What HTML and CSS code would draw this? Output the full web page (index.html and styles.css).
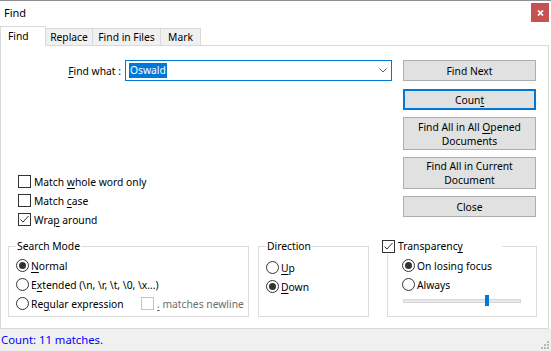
FILE: index.html
```html
<!DOCTYPE html>
<html lang="en">
<head>
<meta charset="utf-8">
<title>Find</title>
<link rel="stylesheet" href="styles.css">
</head>
<body>
<div class="window">
  <div class="titlebar">
    <span class="title">Find</span>
    <span class="close"><svg width="7" height="6" viewBox="0 0 7 6"><path d="M1 0.5L6 5.5M6 0.5L1 5.5" stroke="#fff" stroke-width="1.7"/></svg></span>
  </div>
  <div class="tabs">
    <div class="tab tab-active tab-find">Find</div>
    <div class="tab tab-replace">Replace</div>
    <div class="tab tab-files">Find in Files</div>
    <div class="tab tab-mark">Mark</div>
  </div>
  <div class="panel">
    <div class="main">
      <div class="left">
        <div class="findrow">
          <span class="findlabel"><u>F</u>ind what :</span>
          <div class="combo">
            <span class="selected">Oswald</span>
            <svg class="chevron" width="8" height="5" viewBox="0 0 8 5"><path d="M0.5 0.5L4 4L7.5 0.5" fill="none" stroke="#606060" stroke-width="1"/></svg>
          </div>
        </div>
        <div class="checks">
          <div class="opt"><span class="cbox"></span><span>Match <u>w</u>hole word only</span></div>
          <div class="opt"><span class="cbox"></span><span>Match <u>c</u>ase</span></div>
          <div class="opt"><span class="cbox"><svg width="11" height="11" viewBox="0 0 11 11"><path d="M1.5 5.5L4 8L9.5 2" fill="none" stroke="#333" stroke-width="1"/></svg></span><span>Wra<u>p</u> around</span></div>
        </div>
      </div>
      <div class="buttons">
        <div class="btn"><span>Find Next</span></div>
        <div class="btn btn-focus"><span>Coun<u>t</u></span></div>
        <div class="btn btn-tall"><span>Find All in All <u>O</u>pened<br>Documents</span></div>
        <div class="btn btn-tall2"><span>Find All in Current<br>Document</span></div>
        <div class="btn"><span>Close</span></div>
      </div>
    </div>
    <div class="groups">
      <fieldset class="group group-search">
        <legend>Search Mode</legend>
        <div class="opt first"><span class="radio on"></span><span><u>N</u>ormal</span></div>
        <div class="opt"><span class="radio"></span><span>E<u>x</u>tended (\n, \r, \t, \0, \x...)</span></div>
        <div class="opt"><span class="radio"></span><span class="regex-label">Re<u>g</u>ular expression</span><span class="cbox cbox-disabled"></span><span class="disabled-text"><u>.</u> matches newline</span></div>
      </fieldset>
      <fieldset class="group group-dir">
        <legend>Direction</legend>
        <div class="opt first"><span class="radio"></span><span><u>U</u>p</span></div>
        <div class="opt"><span class="radio on"></span><span><u>D</u>own</span></div>
      </fieldset>
      <fieldset class="group group-trans">
        <legend><span class="cbox"><svg width="11" height="11" viewBox="0 0 11 11"><path d="M1.5 5.5L4 8L9.5 2" fill="none" stroke="#333" stroke-width="1"/></svg></span><span>Transparenc<u>y</u></span></legend>
        <div class="opt first"><span class="radio on"></span><span>On losing focus</span></div>
        <div class="opt"><span class="radio"></span><span>Always</span></div>
        <div class="slider"><div class="track"></div><div class="thumb"></div></div>
      </fieldset>
    </div>
  </div>
  <div class="status">
    <span class="status-text">Count: 11 matches.</span>
    <svg class="grip" width="10" height="10" viewBox="0 0 10 10" fill="#b8b8b8"><rect x="7" y="1" width="2" height="2"/><rect x="4" y="4" width="2" height="2"/><rect x="7" y="4" width="2" height="2"/><rect x="1" y="7" width="2" height="2"/><rect x="4" y="7" width="2" height="2"/><rect x="7" y="7" width="2" height="2"/></svg>
  </div>
</div>
</body>
</html>
```

FILE: styles.css
```css
* { box-sizing: border-box; }
html, body { margin: 0; padding: 0; }
body {
  width: 551px; height: 351px; overflow: hidden; background: #fff;
  font-family: "Noto Sans", "Open Sans", sans-serif;
  font-size: 10.3px; line-height: 16px; color: #000;
}
u { text-decoration: underline; text-decoration-thickness: 1px; text-underline-offset: 2px; }

.window { width: 551px; height: 351px; display: flex; flex-direction: column; border-top: 1px solid #8f8f8f; }

.titlebar { height: 22px; flex: none; display: flex; align-items: flex-start; justify-content: space-between; padding-left: 4px; padding-right: 2px; }
.title { line-height: 23px; font-size: 11px; }
.close { margin-top: 2px; width: 18px; height: 19px; background: #c75050; display: flex; align-items: center; justify-content: center; }

.tabs { height: 22px; flex: none; display: flex; align-items: flex-end; }
.tab { height: 17px; border: 1px solid #d9d9d9; border-bottom: none; background: #f0f0f0; text-align: center; line-height: 16px; margin-left: -1px; white-space: nowrap; }
.tab-active { height: 20px; margin-left: 0; margin-bottom: -1px; background: #fff; position: relative; z-index: 1; text-align: left; padding-left: 7px; padding-top: 1px; }
.tab-find { width: 46px; }
.tab-replace { width: 48px; }
.tab-files { width: 69px; }
.tab-mark { width: 41px; }

.panel { height: 284px; width: 549px; flex: none; border: 1px solid #d9d9d9; display: flex; flex-direction: column; }
.main { display: flex; padding-top: 14px; }
.left { width: 391px; }
.findrow { display: flex; align-items: center; height: 21px; }
.findlabel { width: 120px; text-align: right; white-space: nowrap; }
.combo { margin-left: 4px; width: 267px; height: 21px; border: 1px solid #0078d7; display: flex; align-items: center; padding-left: 3px; padding-right: 4px; }
.selected { background: #0078d7; color: #fff; line-height: 15px; padding: 0 1px; }
.chevron { margin-left: auto; }

.checks { margin-top: 91px; }
.opt { display: flex; align-items: center; height: 19px; white-space: nowrap; }
.checks .opt { padding-left: 17px; }
.cbox { width: 13px; height: 13px; border: 1px solid #333; background: #fff; margin-right: 3px; flex: none; display: flex; align-items: center; justify-content: center; }
.cbox-disabled { border-color: #c4c4c4; }
.disabled-text { color: #6d6d6d; }
.radio { width: 13px; height: 13px; border: 1px solid #333; border-radius: 50%; margin-right: 2px; flex: none; display: flex; align-items: center; justify-content: center; background: #fff; }
.radio.on::after { content: ""; width: 7px; height: 7px; border-radius: 50%; background: #333; }
.regex-label { width: 110px; }

.buttons { margin-left: 11px; width: 133px; display: flex; flex-direction: column; gap: 7px; }
.btn { height: 21px; background: #e1e1e1; border: 1px solid #adadad; display: flex; align-items: center; justify-content: center; text-align: center; line-height: 14px; white-space: nowrap; }
.btn-focus { margin-top: 1px; border: 2px solid #0078d7; }
.btn-tall { height: 33px; }
.btn-tall2 { height: 32px; }

.groups { display: flex; align-items: flex-start; padding-left: 7px; margin-top: 9px; }
.group { margin: 0; padding: 0 0 0 7px; border: 1px solid #dcdcdc; height: 79px; min-width: 0; }
.group legend { padding: 0 1px; line-height: 16px; }
.group-search { width: 241px; }
.group-dir { width: 111px; margin-left: 9px; }
.group-trans { width: 150px; margin-left: 18px; padding-left: 14px; }
.group-trans legend { margin-left: -20px; width: 120px; padding: 0; display: flex; align-items: center; }
.first { margin-top: 2px; }
.group-dir .first { margin-top: 4px; }

.slider { margin-top: 1px; margin-left: 1px; width: 118px; height: 11px; position: relative; display: flex; align-items: center; }
.track { width: 100%; height: 4px; background: #e7eaea; border: 1px solid #d6d6d6; }
.thumb { position: absolute; left: 82px; top: 0; width: 4px; height: 11px; background: #0078d7; }

.status { flex: 1; background: #f0f0f0; display: flex; align-items: center; justify-content: space-between; padding-left: 1px; color: #0000ff; }
.status-text { font-size: 11.3px; }
.grip { align-self: flex-end; margin-bottom: 1px; margin-right: 1px; }
```
